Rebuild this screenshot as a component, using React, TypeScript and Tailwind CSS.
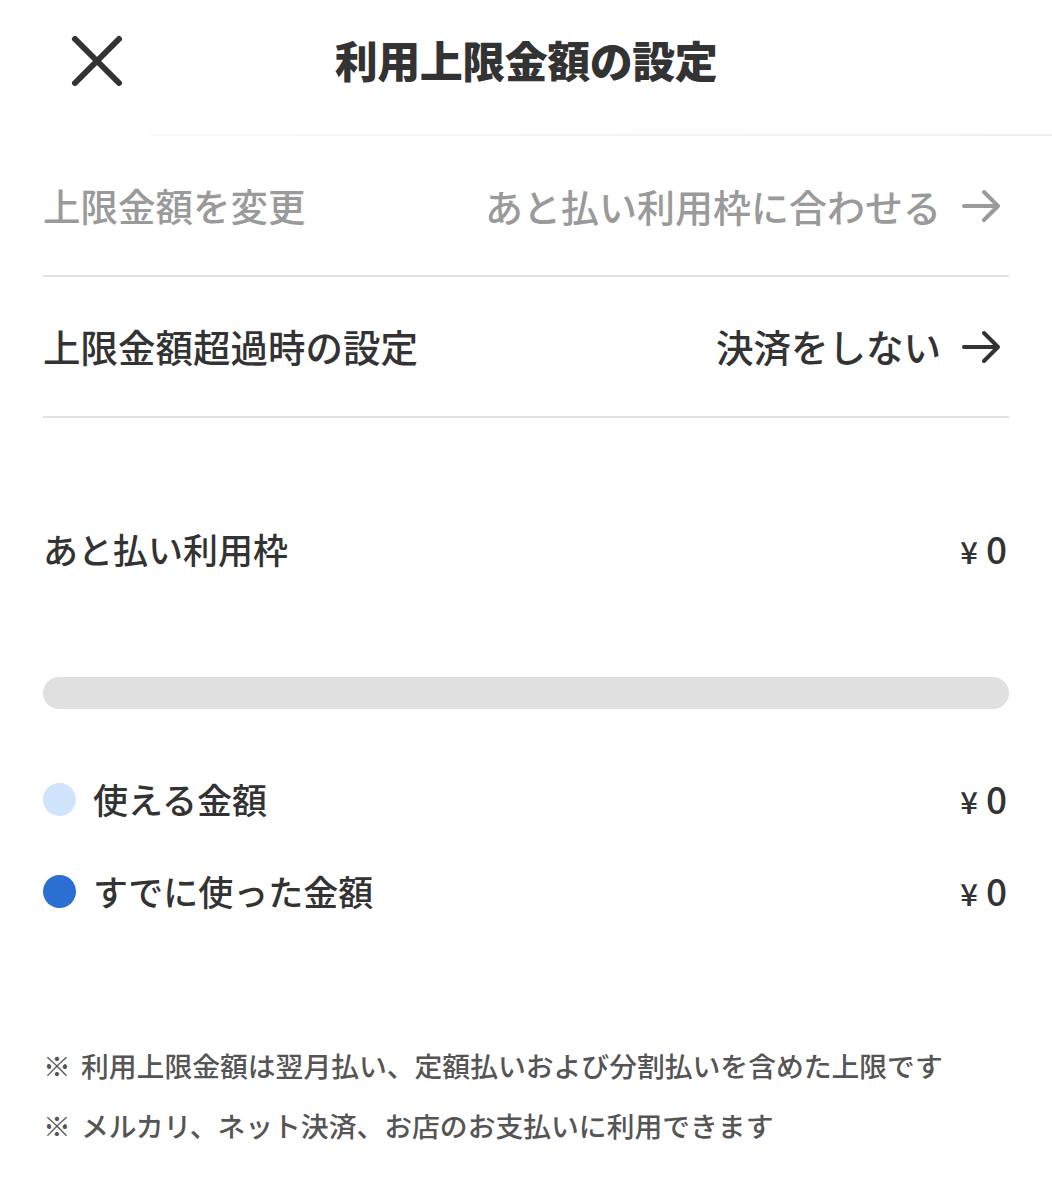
import React from "react";

const font = { fontFamily: '"Noto Sans CJK JP", "Noto Sans", sans-serif' };

function Arrow({ color }: { color: string }) {
  return (
    <svg width="40" height="40" viewBox="0 0 40 40" fill="none" className="shrink-0">
      <path d="M3 20 H36 M23 6 L37 20 L23 34" stroke={color} strokeWidth="4" strokeLinecap="round" strokeLinejoin="round" />
    </svg>
  );
}

function Yen() {
  return (
    <div className="flex items-baseline gap-[8px] text-[#333] pr-[2px]">
      <span className="text-[31px] font-medium">¥</span>
      <span className="text-[37px] font-medium">0</span>
    </div>
  );
}

export default function App() {
  return (
    <div className="w-[1052px] min-h-[1200px] bg-white" style={font}>
      <div className="relative h-[136px] flex items-center justify-center">
        <svg width="56" height="56" viewBox="0 0 56 56" className="absolute left-[69px] top-[33px]">
          <path d="M6 6 L50 50 M50 6 L6 50" stroke="#333" strokeWidth="6" strokeLinecap="round" />
        </svg>
        <h1 className="text-[43px] font-black text-[#333] leading-none tracking-[-0.5px] mt-[-18px]">利用上限金額の設定</h1>
        <div className="absolute left-[150px] right-0 bottom-0 h-[2px] bg-gradient-to-r from-[#fafafa] to-[#efefef]" />
      </div>

      <div className="px-[43px]">
        <div className="h-[141px] flex items-center justify-between border-b-2 border-[#e0e0e0]">
          <span className="text-[37.5px] font-medium text-[#9a9a9a]">上限金額を変更</span>
          <div className="flex items-center gap-[20px] pr-[8px]">
            <span className="text-[38px] font-medium text-[#9a9a9a]">あと払い利用枠に合わせる</span>
            <Arrow color="#9a9a9a" />
          </div>
        </div>
        <div className="h-[141px] flex items-center justify-between border-b-2 border-[#e0e0e0]">
          <span className="text-[37.5px] font-medium text-[#333]">上限金額超過時の設定</span>
          <div className="flex items-center gap-[20px] pr-[8px]">
            <span className="text-[37.5px] font-medium text-[#333]">決済をしない</span>
            <Arrow color="#333" />
          </div>
        </div>

        <div className="mt-[107px] h-[48px] flex items-center justify-between">
          <span className="text-[35px] font-medium text-[#333]">あと払い利用枠</span>
          <Yen />
        </div>

        <div className="mt-[104px] h-[32px] rounded-full bg-[#e0e0e0]" />

        <div className="mt-[66px] h-[48px] flex items-center justify-between">
          <div className="flex items-center gap-[17px]">
            <div className="w-[33px] h-[33px] rounded-full bg-[#d0e4fb]" />
            <span className="text-[35px] font-medium text-[#333]">使える金額</span>
          </div>
          <Yen />
        </div>
        <div className="mt-[44px] h-[48px] flex items-center justify-between">
          <div className="flex items-center gap-[17px]">
            <div className="w-[33px] h-[33px] rounded-full bg-[#2c6fd2]" />
            <span className="text-[35px] font-medium text-[#333]">すでに使った金額</span>
          </div>
          <Yen />
        </div>

        <div className="mt-[131px] flex flex-col gap-[20px] text-[27.8px] font-medium text-[#555]">
          <div className="h-[40px] flex items-center">
            <span className="w-[38px]">※</span>
            <span>利用上限金額は翌月払い、定額払いおよび分割払いを含めた上限です</span>
          </div>
          <div className="h-[40px] flex items-center">
            <span className="w-[38px]">※</span>
            <span>メルカリ、ネット決済、お店のお支払いに利用できます</span>
          </div>
        </div>
      </div>
    </div>
  );
}
